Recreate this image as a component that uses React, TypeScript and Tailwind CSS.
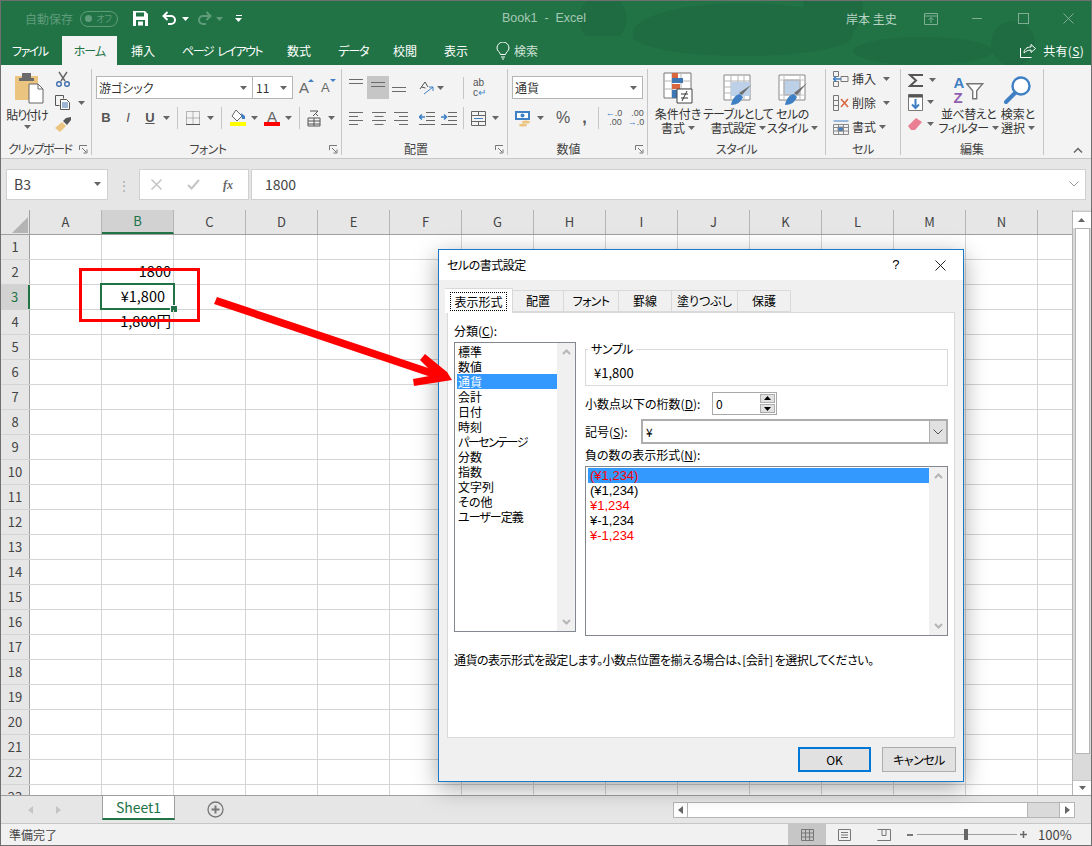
import React from 'react';

const Caret = ({ className = 'fill-[#666]' }: { className?: string }) => (
  <svg width="7" height="4" viewBox="0 0 7 4" className={`shrink-0 ${className}`}><path d="M0 0h7L3.5 4z" /></svg>
);

const Launcher = () => (
  <svg width="9" height="9" viewBox="0 0 9 9" className="absolute right-[3px] bottom-[1px]" fill="none" stroke="#777">
    <path d="M0.5 5V0.5H8" /><path d="M3 3l4 4M8 4.5v3.5H4.5" />
  </svg>
);

function Group({ w, label, labelClass = 'justify-center', children }: { w: string; label: string; labelClass?: string; children: React.ReactNode }) {
  return (
    <div className={`relative h-[86px] shrink-0 border-r border-[#c6c6c6] ${w}`}>
      {children}
      <div className={`absolute left-0 right-0 bottom-[-2px] flex text-[12px] leading-[16px] text-[#444] ${labelClass}`}>{label}</div>
    </div>
  );
}

const Sep = ({ ml }: { ml: string }) => <div className={`w-px h-[22px] bg-[#c6c6c6] shrink-0 ${ml}`} />;

const Lines = ({ kind }: { kind: 'top' | 'left' | 'center' | 'right' }) => {
  const d = {
    top: 'M0 2.5h14M0 6.5h14',
    left: 'M0 1.5h14M0 5.5h9M0 9.5h14M0 13.5h9',
    center: 'M0 1.5h14M2.5 5.5h9M0 9.5h14M2.5 13.5h9',
    right: 'M0 1.5h14M5 5.5h9M0 9.5h14M5 13.5h9',
  }[kind];
  return <svg width="14" height="15" viewBox="0 0 14 15" className="shrink-0"><path d={d} stroke="#6b6b6b" fill="none" /></svg>;
};

function BigButton({ icon, line1, line2, w, track = '' }: { icon: React.ReactNode; line1: string; line2: string; w: string; track?: string }) {
  return (
    <div className={`flex flex-col items-center shrink-0 ${w}`}>
      <div className="h-[35px] flex items-center">{icon}</div>
      <div className={`text-[12px] leading-[14px] text-[#333] whitespace-nowrap ${track}`}>{line1}</div>
      <div className={`text-[12px] leading-[14px] text-[#333] whitespace-nowrap flex items-center gap-[3px] ${track}`}>{line2}<Caret /></div>
    </div>
  );
}

const CondIcon = () => (
  <svg width="30" height="35" viewBox="0 0 30 35" fill="none">
    <path d="M1 1h27v25H1z" fill="#fff" stroke="#777" />
    <path d="M1 9h27M1 17h27M9 1v25M18 1v25" stroke="#b5b5b5" />
    <path d="M9 1h6v5H9z" fill="#d9663f" /><path d="M9 6h11v5H9z" fill="#3f77b5" /><path d="M9 12h8v5H9z" fill="#d9663f" /><path d="M9 18h5v8H9z" fill="#3f77b5" />
    <path d="M14 17h15v14H14z" fill="#fff" stroke="#444" />
    <path d="M18 22h7M18 26h7M24 19l-5 10" stroke="#333" />
  </svg>
);
const TableIcon = () => (
  <svg width="30" height="32" viewBox="0 0 30 32" fill="none">
    <path d="M1 1h26v25H1z" fill="#fff" stroke="#888" />
    <path d="M1 7h26M1 13h26M1 19h26M8 1v25M15 1v25M21 1v25" stroke="#b5b5b5" />
    <path d="M8 8h19v14H8z" fill="#bcd0e8" />
    <path d="M28 11l-9 10-3-2z" fill="#6d6d6d" /><path d="M8 31c1-6 4-10 9-11l3 3c-2 5-6 8-12 8z" fill="#3f80c4" />
  </svg>
);
const StyleIcon = () => (
  <svg width="30" height="32" viewBox="0 0 30 32" fill="none">
    <path d="M1 1h26v25H1z" fill="#fff" stroke="#888" />
    <path d="M6 6h16v15H6z" fill="#bcd0e8" stroke="#999" />
    <path d="M1 6h26M1 21h26M6 1v25M22 1v25" stroke="#c0c0c0" />
    <path d="M29 9l-10 12-3-2z" fill="#6d6d6d" /><path d="M7 31c1-6 4-10 9-11l3 3c-2 5-6 8-12 8z" fill="#3f80c4" />
  </svg>
);
const SortIcon = () => (
  <div className="relative w-[30px] h-[30px] font-['Liberation_Sans'] font-bold text-[15px] leading-[15px]">
    <div className="text-[#3f80c4]">A</div>
    <div className="text-[#8e5fb0]">Z</div>
    <svg width="18" height="17" viewBox="0 0 18 17" fill="none" className="absolute left-[12px] top-[8px]"><path d="M.7 .7h16l-6 7v8h-4v-8z" fill="#fff" stroke="#777" strokeWidth="1.4" /></svg>
  </div>
);
const FindIcon = () => (
  <svg width="28" height="30" viewBox="0 0 28 30" fill="none">
    <circle cx="17" cy="11" r="8.5" stroke="#3f80c4" strokeWidth="2.4" fill="#fff" />
    <path d="M11 18L2 27" stroke="#3f80c4" strokeWidth="4" strokeLinecap="round" />
  </svg>
);

function Ribbon() {
  return (
    <div className="flex h-[94px] shrink-0 pt-[4px] bg-[#f3f3f3] border-b border-[#c6c6c6]">
      <Group w="w-[91px]" label="クリップボード" labelClass="pl-[7px] tracking-[-1.5px]">
        <div className="flex">
          <div className="w-[50px] flex flex-col items-center pt-[3px] pl-[2px]">
            <svg width="30" height="32" viewBox="0 0 30 32" fill="none" className="ml-[3px]">
              <path d="M1 4h23v24H1z" fill="#ebc47f" /><path d="M8 1h9v5h3v3H5V6h3z" fill="#6b6b6b" />
              <path d="M15 12h9l5 5v14H15z" fill="#fff" stroke="#666" /><path d="M24 12v5h5" stroke="#666" />
            </svg>
            <div className="mt-[3px] text-[12px] leading-[15px] text-[#333] whitespace-nowrap tracking-[-1px]">貼り付け</div>
            <div className="mt-[3px]"><Caret /></div>
          </div>
          <div className="flex flex-col pl-[4px] pt-[2px]">
            <svg width="16" height="16" viewBox="0 0 16 16" fill="none" stroke="#3f6fae" strokeWidth="1.4"><path d="M4 1l6 9M12 1L6 10" stroke="#666" /><circle cx="4" cy="13" r="2.3" /><circle cx="12" cy="13" r="2.3" /></svg>
            <div className="flex items-center gap-[7px] mt-[8px]">
              <svg width="16" height="15" viewBox="0 0 16 15" fill="none" stroke="#555"><path d="M.5 .5h8v3M.5 .5v10h4" /><path d="M5.5 4.5h6l3 3v7h-9z" fill="#fff" /><path d="M7 8h6M7 10h6M7 12h6" stroke="#3f6fae" /></svg>
              <Caret />
            </div>
            <svg width="17" height="15" viewBox="0 0 17 15" className="mt-[7px]"><path d="M0 11l7-6 4 4-6 6z" fill="#ebc47f" /><path d="M8 4l3-3 5-1 0 3-4 5z" fill="#555" /></svg>
          </div>
        </div>
        <Launcher />
      </Group>

      <Group w="w-[250px]" label="フォント" labelClass="justify-center pr-[17px] tracking-[-0.5px]">
        <div className="flex items-center pl-[4px] pt-[7px]">
          <div className="w-[157px] h-[23px] bg-white border border-[#b5b5b5] flex items-center justify-between pl-[2px] pr-[5px] text-[12px] text-[#333]">游ゴシック<Caret /></div>
          <div className="w-[40px] h-[23px] bg-white border border-l-0 border-[#b5b5b5] flex items-center justify-between pl-[3px] pr-[5px] text-[12px] text-[#333]">11<Caret /></div>
          <span className="relative ml-[6px] w-[16px] text-[15px] leading-[18px] text-[#666] font-['Liberation_Sans']">A
            <svg width="6" height="3" viewBox="0 0 6 3" className="absolute left-[9px] top-[0px] fill-[#3f80c4]"><path d="M0 3l3-3 3 3z" /></svg>
          </span>
          <span className="relative ml-[6px] w-[16px] text-[13px] leading-[18px] text-[#666] font-['Liberation_Sans']">A
            <svg width="6" height="3" viewBox="0 0 6 3" className="absolute left-[9px] top-[0px] fill-[#3f80c4]"><path d="M0 0h6L3 3z" /></svg>
          </span>
        </div>
        <div className="flex items-center mt-[8px] h-[22px]">
          <span className="ml-[7px] w-[14px] text-center text-[13px] font-bold text-[#555] font-['Liberation_Sans']">B</span>
          <span className="ml-[8px] w-[14px] text-center text-[13px] italic text-[#555] font-['Liberation_Sans']">I</span>
          <span className="ml-[8px] w-[14px] text-center text-[13px] font-bold underline text-[#555] font-['Liberation_Sans']">U</span>
          <span className="ml-[6px]"><Caret /></span>
          <Sep ml="ml-[7px]" />
          <svg width="14" height="14" viewBox="0 0 14 14" className="ml-[8px] shrink-0" fill="none" stroke="#777" strokeDasharray="1 1"><path d="M.5 .5h13v13H.5zM.5 7h13M7 .5v13" /><path d="M0 13.5h14" stroke="#555" strokeDasharray="none" /></svg>
          <span className="ml-[7px]"><Caret /></span>
          <Sep ml="ml-[7px]" />
          <svg width="17" height="16" viewBox="0 0 17 16" className="ml-[7px] shrink-0"><path d="M7 0l6 6-5 5-5-5z" fill="#fff" stroke="#666" /><path d="M12 3l4 3v3h-3z" fill="#3f80c4" /><path d="M1 12h16v4H1z" fill="#ffff00" /></svg>
          <span className="ml-[5px]"><Caret /></span>
          <span className="relative ml-[6px] w-[16px] h-[16px] text-center text-[15px] leading-[13px] text-[#666] font-['Liberation_Sans']">A
            <span className="absolute left-0 bottom-0 w-[16px] h-[4px] bg-[#ff0000]" />
          </span>
          <span className="ml-[5px]"><Caret /></span>
          <Sep ml="ml-[7px]" />
          <svg width="14" height="17" viewBox="0 0 14 17" className="ml-[7px] shrink-0" fill="none" stroke="#555"><path d="M3 1h8L6 6M8 3l3 3" /><path d="M1 8h12v8H1zM1 11h12M1 14h12M7 8v8" /></svg>
          <span className="ml-[7px]"><Caret /></span>
        </div>
        <Launcher />
      </Group>

      <Group w="w-[166px]" label="配置" labelClass="justify-center pr-[17px]">
        <div className="flex items-center mt-[7px] h-[23px]">
          <span className="ml-[7px] mb-[6px]"><Lines kind="top" /></span>
          <div className="ml-[4px] w-[22px] h-[23px] bg-[#c6c6c6] flex items-center justify-center"><Lines kind="top" /></div>
          <span className="ml-[3px] mt-[10px]"><Lines kind="top" /></span>
          <svg width="16" height="16" viewBox="0 0 16 16" className="ml-[12px] shrink-0" fill="none" stroke="#555"><path d="M2 9l5-7 3 5M3.500 7l4 1" /><path d="M6 14l9-7M11 7h4v4" stroke="#3f80c4" /></svg>
          <span className="ml-[3px]"><Caret /></span>
          <div className="ml-[19px] w-px h-[22px] bg-[#c6c6c6]" />
          <div className="ml-[9px] text-[10px] leading-[10px] text-[#555] font-['Liberation_Sans']">
            <div>ab</div><div>c<span className="text-[#3f80c4]">↵</span></div>
          </div>
        </div>
        <div className="flex items-center mt-[8px] h-[22px]">
          <span className="ml-[7px]"><Lines kind="left" /></span>
          <span className="ml-[9px]"><Lines kind="center" /></span>
          <span className="ml-[8px]"><Lines kind="right" /></span>
          <svg width="16" height="13" viewBox="0 0 16 13" className="ml-[11px] shrink-0" fill="none"><path d="M7 .5h9M7 4.500h9M7 8.500h9M0 12.500h16" stroke="#666" /><path d="M6 5H1M3 2.500L.5 5 3 7.500" stroke="#3f80c4" strokeWidth="1.600" /></svg>
          <svg width="16" height="13" viewBox="0 0 16 13" className="ml-[6px] shrink-0" fill="none"><path d="M7 .5h9M7 4.500h9M7 8.500h9M0 12.500h16" stroke="#666" /><path d="M0 5h5M3 2.500L5.500 5 3 7.500" stroke="#3f80c4" strokeWidth="1.600" /></svg>
          <div className="ml-[6px] w-px h-[22px] bg-[#c6c6c6]" />
          <svg width="15" height="15" viewBox="0 0 15 15" className="ml-[7px] shrink-0" fill="none" stroke="#666"><path d="M.5 .5h14v14H.5zM.5 4.500h14M.5 10.500h14M7.500 .5v4M7.500 10.500v4" /><path d="M3 7.500h9" stroke="#3f80c4" /></svg>
          <span className="ml-[6px]"><Caret /></span>
        </div>
        <Launcher />
      </Group>

      <Group w="w-[140px]" label="数値" labelClass="justify-center pr-[18px]">
        <div className="pl-[4px] pt-[7px]">
          <div className="w-[131px] h-[23px] bg-white border border-[#b5b5b5] flex items-center justify-between pl-[2px] pr-[5px] text-[12px] text-[#333]">通貨<Caret /></div>
        </div>
        <div className="flex items-center mt-[8px] h-[22px]">
          <svg width="17" height="17" viewBox="0 0 17 17" className="ml-[7px] shrink-0"><path d="M0 1h15v9H0z" fill="#3f80c4" /><path d="M2 3h11v5H2z" fill="#fff" /><circle cx="7.500" cy="5.500" r="2" fill="#3f80c4" /><ellipse cx="11" cy="12" rx="4" ry="1.600" fill="#ebc47f" /><ellipse cx="8" cy="15" rx="4" ry="1.600" fill="#ebc47f" /></svg>
          <span className="ml-[5px]"><Caret /></span>
          <span className="ml-[12px] text-[16px] leading-[20px] text-[#555] font-['Liberation_Sans']">%</span>
          <span className="ml-[12px] text-[16px] leading-[20px] font-bold text-[#555] font-['Liberation_Sans']">,</span>
          <div className="ml-[11px] w-px h-[22px] bg-[#c6c6c6]" />
          <div className="ml-[7px] w-[16px] text-[9px] leading-[9px] text-[#555] text-right font-['Liberation_Sans']"><div><span className="text-[#3f80c4]">←</span>.0</div><div>.00</div></div>
          <div className="ml-[6px] w-[16px] text-[9px] leading-[9px] text-[#555] text-right font-['Liberation_Sans']"><div>.00</div><div><span className="text-[#3f80c4]">→</span>.0</div></div>
        </div>
        <Launcher />
      </Group>

      <Group w="w-[178px]" label="スタイル" labelClass="justify-center tracking-[-0.5px]">
        <div className="flex pt-[3px]">
          <BigButton w="w-[60px]" icon={<CondIcon />} line1="条件付き" line2="書式" />
          <BigButton w="w-[60px]" icon={<TableIcon />} line1="テーブルとして" line2="書式設定" track="tracking-[-0.7px]" />
          <BigButton w="w-[53px] ml-[-2px]" icon={<StyleIcon />} line1="セルの" line2="スタイル" track="tracking-[-0.5px]" />
        </div>
      </Group>

      <Group w="w-[75px]" label="セル" labelClass="justify-center tracking-[-0.5px]">
        <div className="flex flex-col pl-[7px] mt-[-2px] gap-[1px] text-[12px] text-[#333]">
          <div className="flex items-center h-[23px]">
            <svg width="16" height="16" viewBox="0 0 16 16" fill="none" stroke="#777" className="shrink-0"><path d="M.5 .5h5v5h-5zM.5 10.500h5v5h-5zM8 5.500h7v5H8z" /><path d="M8 8H1M3 5.500L.5 8 3 10.500" stroke="#3f80c4" strokeWidth="1.500" /></svg>
            <span className="ml-[3px] w-[31px]">挿入</span><Caret />
          </div>
          <div className="flex items-center h-[23px]">
            <svg width="16" height="16" viewBox="0 0 16 16" fill="none" stroke="#777" className="shrink-0"><path d="M.5 .5h5v5h-5zM.5 10.500h5v5h-5zM.5 5.500h5v5h-5z" /><path d="M8 4l7 8M15 4l-7 8" stroke="#d9663f" strokeWidth="1.500" /></svg>
            <span className="ml-[3px] w-[31px]">削除</span><Caret />
          </div>
          <div className="flex items-center h-[23px]">
            <svg width="16" height="16" viewBox="0 0 16 16" fill="none" stroke="#888" className="shrink-0"><path d="M.5 2h15" stroke="#3f80c4" /><path d="M.5 5.500h15v10H.5zM.5 8.500h15M.5 12h15M5.500 5.500v10M10.500 5.500v10" /><path d="M5 8h5v4H5z" fill="#3f80c4" /></svg>
            <span className="ml-[3px] w-[27px]">書式</span><Caret />
          </div>
        </div>
      </Group>

      <Group w="w-[143px]" label="編集">
        <div className="flex pt-[3px]">
          <div className="flex flex-col pl-[7px] w-[44px] shrink-0 mt-[-3px]">
            <div className="flex items-center h-[22px] gap-[5px]">
              <svg width="16" height="15" viewBox="0 0 16 15" fill="none" stroke="#555" strokeWidth="2"><path d="M15 2H2l6 5.500L2 13h13" /></svg><Caret />
            </div>
            <div className="flex items-center h-[22px] gap-[4px]">
              <svg width="15" height="17" viewBox="0 0 15 17" fill="none"><path d="M.5 .5h14v16H.5z" fill="#fff" stroke="#777" /><path d="M.5 .5h14v3H.5z" fill="#555" /><path d="M7.500 5v9M4 10.500l3.500 3.500 3.500-3.500" stroke="#3f80c4" strokeWidth="2" /></svg><Caret />
            </div>
            <div className="flex items-center h-[22px] gap-[4px]">
              <svg width="15" height="14" viewBox="0 0 15 14"><path d="M0 9l8-8 6 4-7 8H3z" fill="#ea7f93" /></svg><Caret />
            </div>
          </div>
          <BigButton w="w-[47px]" icon={<SortIcon />} line1="並べ替えと" line2="フィルター" track="tracking-[-0.5px]" />
          <BigButton w="w-[48px] ml-[2px]" icon={<FindIcon />} line1="検索と" line2="選択" />
        </div>
      </Group>

      <div className="flex-1 relative">
        <svg width="10" height="6" viewBox="0 0 10 6" className="absolute right-[8px] bottom-[5px]" fill="none" stroke="#666" strokeWidth="1.500"><path d="M1 5.500l4-4 4 4" /></svg>
      </div>
    </div>
  );
}

const columns = ['A', 'B', 'C', 'D', 'E', 'F', 'G', 'H', 'I', 'J', 'K', 'L', 'M', 'N'];
const rows = Array.from({ length: 23 }, (_, i) => i + 1);

function Sheet() {
  return (
    <div className="flex-1 flex min-h-0 bg-white overflow-hidden">
      <div className="flex-1 min-w-0 overflow-hidden">
        <div className="flex h-[25px] bg-[#e6e6e6] border-b border-[#9f9f9f]">
          <div className="relative w-[29px] shrink-0 border-r border-[#9f9f9f]">
            <svg width="16" height="16" viewBox="0 0 16 16" className="absolute right-[1px] bottom-[1px] fill-[#b4b4b4]"><path d="M16 0v16H0z" /></svg>
          </div>
          {columns.map(c => (
            <div key={c} className={`w-[72px] shrink-0 border-r border-[#b5b5b5] flex items-center justify-center text-[13px] ${c === 'B' ? 'bg-[#d2d2d2] text-[#217346] border-b-2 border-b-[#217346]' : 'text-[#444]'}`}>{c}</div>
          ))}
          <div className="w-[40px] shrink-0" />
        </div>
        {rows.map(r => (
          <div key={r} className="flex h-[25px] border-b border-[#d4d4d4]">
            <div className={`w-[29px] shrink-0 border-r border-[#9f9f9f] flex items-center justify-center text-[13px] ${r === 3 ? 'bg-[#d2d2d2] text-[#217346] border-r-2 border-r-[#217346]' : 'bg-[#e6e6e6] text-[#444]'}`}>{r}</div>
            {columns.map(c => (
              <div key={c} className="relative w-[72px] shrink-0 border-r border-[#d4d4d4] flex items-center justify-end pr-[2px] pb-[2px] text-[14.5px] text-black whitespace-nowrap">
                {c === 'B' && r === 2 && '1800'}
                {c === 'B' && r === 3 && <span className="pr-[6px]">¥1,800</span>}
                {c === 'B' && r === 4 && '1,800円'}
                {c === 'B' && r === 3 && (
                  <div className="absolute left-[-2px] top-[-2px] w-[75px] h-[27px] border-2 border-[#217346]">
                    <div className="absolute right-[-4px] bottom-[-4px] w-[7px] h-[7px] bg-[#217346] border-l border-t border-white" />
                  </div>
                )}
              </div>
            ))}
          </div>
        ))}
      </div>
      <div className="w-[19px] shrink-0 bg-[#dadada] border-l border-[#b5b5b5] flex flex-col items-center">
        <div className="w-full h-[17px] bg-white border-b border-[#c6c6c6] flex items-center justify-center rotate-180 mt-[1px]"><Caret /></div>
        <div className="w-[15px] h-[526px] bg-white border border-[#b5b5b5]" />
        <div className="mt-auto w-full h-[15px] bg-white border-t border-[#c6c6c6] flex items-center justify-center"><Caret /></div>
      </div>
    </div>
  );
}

function TabHead({ label, active, w }: { label: string; active?: boolean; w: string }) {
  return (
    <div className={`flex items-center justify-center text-[12px] text-black border border-[#d9d9d9] border-l-0 ${w} ${active ? 'h-[25px] bg-white border-l border-b-0 relative z-10 mb-[-1px]' : 'h-[22px] bg-[#f0f0f0]'}`}>
      {active ? <span className="border border-dotted border-black px-[3px] leading-[17px]">{label}</span> : label}
    </div>
  );
}

const categories: [string, string][] = [
  ['標準', ''], ['数値', ''], ['通貨', ''], ['会計', ''], ['日付', ''], ['時刻', ''],
  ['パーセンテージ', 'tracking-[-1.5px]'], ['分数', ''], ['指数', ''], ['文字列', ''], ['その他', ''], ['ユーザー定義', 'tracking-[-1px]'],
];
const negatives = ['(¥1,234)', '(¥1,234)', '¥1,234', '¥-1,234', '¥-1,234'];

const ListScroll = () => (
  <div className="absolute right-0 top-0 bottom-0 w-[18px] bg-[#f0f0f0] flex flex-col items-center justify-between py-[6px]">
    <svg width="9" height="6" viewBox="0 0 9 6" fill="none" stroke="#b5b5b5" strokeWidth="2"><path d="M1 5l3.500-3.500L8 5" /></svg>
    <svg width="9" height="6" viewBox="0 0 9 6" fill="none" stroke="#b5b5b5" strokeWidth="2"><path d="M1 1l3.500 3.500L8 1" /></svg>
  </div>
);

function FormatDialog() {
  return (
    <div className="absolute left-[437px] top-[248px] w-[526px] h-[533px] bg-[#f0f0f0] border border-[#1979ca] shadow-[0_6px_22px_rgba(0,0,0,0.35)] flex flex-col z-20">
      <div className="h-[30px] shrink-0 bg-white flex items-center pl-[8px] text-[12px] text-black tracking-[-0.5px]">
        セルの書式設定
        <span className="ml-auto text-[13px] font-['Liberation_Sans']">?</span>
        <svg width="11" height="11" viewBox="0 0 11 11" className="ml-[36px] mr-[17px]" fill="none" stroke="#222"><path d="M.5 .5l10 10M10.500 .5l-10 10" /></svg>
      </div>
      <div className="flex items-end h-[32px] pl-[6px] shrink-0">
        <TabHead label="表示形式" active w="w-[68px]" />
        <TabHead label="配置" w="w-[51px]" />
        <TabHead label="フォント" w="w-[55px] tracking-[-0.7px]" />
        <TabHead label="罫線" w="w-[53px]" />
        <TabHead label="塗りつぶし" w="w-[66px]" />
        <TabHead label="保護" w="w-[53px]" />
      </div>
      <div className="w-[508px] h-[426px] ml-[8px] shrink-0 bg-white border border-[#d9d9d9] relative pl-[6px] pr-[6px] pt-[10px] text-[12px] text-black">
        <div className="flex gap-[9px]">
          <div className="w-[122px] shrink-0">
            <div className="leading-[16px] h-[19px]">分類(<span className="underline">C</span>):</div>
            <div className="relative h-[290px] border border-[#828790] pt-[1px] pl-[2px] leading-[15px]">
              {categories.map(([c, track]) => (
                <div key={c} className={`h-[15px] w-[100px] pl-[1px] whitespace-nowrap ${track} ${c === '通貨' ? 'bg-[#3399ff] text-white' : ''}`}>{c}</div>
              ))}
              <ListScroll />
            </div>
          </div>
          <div className="w-[363px] shrink-0 pt-[26px]">
            <div className="relative h-[37px] border border-[#d9d9d9] flex items-center pl-[8px] pt-[10px] text-[13px]">
              <span className="absolute left-[2px] top-[-8px] bg-white px-[3px] text-[12px] leading-[14px] tracking-[-0.5px]">サンプル</span>
              ¥1,800
            </div>
            <div className="flex items-center mt-[6px] h-[23px]">
              <span className="w-[127px]">小数点以下の桁数(<span className="underline">D</span>):</span>
              <div className="w-[65px] h-[23px] border border-[#a9a9a9] flex items-center justify-between pl-[3px] pr-[1px]">
                0
                <div className="flex flex-col gap-px">
                  <div className="w-[15px] h-[9px] bg-[#e1e1e1] border border-[#adadad] flex items-center justify-center rotate-180"><Caret className="fill-black" /></div>
                  <div className="w-[15px] h-[9px] bg-[#e1e1e1] border border-[#adadad] flex items-center justify-center"><Caret className="fill-black" /></div>
                </div>
              </div>
            </div>
            <div className="flex items-center mt-[4px] h-[25px]">
              <span className="w-[56px]">記号(<span className="underline">S</span>):</span>
              <div className="flex-1 h-[25px] border-2 border-[#adadad] flex items-center justify-between pl-[3px]">
                ¥
                <div className="w-[17px] h-full bg-[#e1e1e1] border-l border-[#adadad] flex items-center justify-center">
                  <svg width="10" height="6" viewBox="0 0 10 6" fill="none" stroke="#555"><path d="M.5 .5l4.500 4.500 4.500-4.500" /></svg>
                </div>
              </div>
            </div>
            <div className="leading-[16px] mt-[3px] h-[19px]">負の数の表示形式(<span className="underline">N</span>):</div>
            <div className="relative h-[170px] border border-[#828790] pt-[1px] pl-[2px] leading-[15px] text-[13px] font-['Liberation_Sans']">
              {negatives.map((n, i) => (
                <div key={i} className={`h-[15px] w-[341px] pl-[2px] ${i === 0 ? 'bg-[#3399ff] text-[#ff0000]' : i === 2 || i === 4 ? 'text-[#ff0000]' : ''}`}>{n}</div>
              ))}
              <ListScroll />
            </div>
          </div>
        </div>
        <div className="mt-[16px] leading-[16px] whitespace-nowrap tracking-[-0.5px]">通貨の表示形式を設定します。小数点位置を揃える場合は、[会計] を選択してください。</div>
      </div>
      <div className="flex justify-end gap-[11px] pt-[9px] pr-[7px] text-[12px] text-black">
        <button className="w-[73px] h-[25px] bg-[#e1e1e1] border-2 border-[#0078d7]">OK</button>
        <button className="w-[74px] h-[25px] bg-[#e1e1e1] border border-[#adadad] tracking-[-0.5px]">キャンセル</button>
      </div>
    </div>
  );
}

export default function App() {
  return (
    <div className="relative w-[1092px] h-[846px] overflow-hidden border border-[#6f6f6f] flex flex-col bg-[#e6e6e6] font-['Noto_Sans_CJK_JP','Noto_Sans',sans-serif] [font-feature-settings:'palt']">
      {/* title bar */}
      <div className="relative h-[35px] shrink-0 bg-[#217346] flex items-center text-[12px] overflow-hidden">
        <svg width="560" height="64" viewBox="0 0 560 64" className="absolute left-[532px] top-0 fill-[#1f6c42]">
          <circle cx="70" cy="18" r="24" /><ellipse cx="210" cy="32" rx="110" ry="30" /><circle cx="300" cy="8" r="30" /><circle cx="480" cy="42" r="22" /><ellipse cx="390" cy="50" rx="70" ry="14" />
        </svg>
        <span className="relative ml-[24px] w-[48px] text-[#5f9c7b] whitespace-nowrap">自動保存</span>
        <div className="relative ml-[7px] w-[38px] h-[16px] rounded-full border border-[#5f9c7b] flex items-center justify-between pl-[4px] pr-[5px] text-[#5f9c7b] text-[9px]">
          <div className="w-[7px] h-[7px] rounded-full bg-[#5f9c7b]" />オフ
        </div>
        <svg width="15" height="15" viewBox="0 0 15 15" className="relative ml-[15px]"><path d="M0 0h12l3 3v12H0z" fill="#fff" /><path d="M3 1.500h8v4H3z" fill="#217346" /><path d="M3 9h9v6H3z" fill="#217346" /><path d="M5 10.500h5v4H5z" fill="#fff" /></svg>
        <svg width="15" height="15" viewBox="0 0 15 15" className="relative ml-[14px]" fill="none" stroke="#fff" strokeWidth="2"><path d="M2 5h7a4 4 0 010 8H6" /><path d="M5.500 1L1.500 5l4 4" /></svg>
        <span className="relative ml-[5px]"><Caret className="fill-white" /></span>
        <svg width="15" height="15" viewBox="0 0 15 15" className="relative ml-[8px]" fill="none" stroke="#5f9c7b" strokeWidth="2"><path d="M13 5H6a4 4 0 000 8h3" /><path d="M9.500 1l4 4-4 4" /></svg>
        <span className="relative ml-[4px]"><Caret className="fill-[#5f9c7b]" /></span>
        <div className="relative ml-[12px] flex flex-col items-center gap-[2px]"><div className="w-[6px] h-px bg-white" /><Caret className="fill-white" /></div>
        <span className="relative ml-[260px] w-[90px] text-[#a6c9b5] text-[12.5px] whitespace-nowrap font-['Liberation_Sans']">Book1&nbsp; -&nbsp; Excel</span>
        <span className="relative ml-[254px] w-[55px] text-[#b9d5c5] whitespace-nowrap">岸本 圭史</span>
        <svg width="14" height="12" viewBox="0 0 14 12" className="relative ml-[23px]" fill="none" stroke="#7fae95"><path d="M.5 .5h13v11H.5zM.5 3h13M7 10V5M4.500 7L7 4.500 9.500 7" /></svg>
        <div className="relative ml-[34px] w-[10px] h-px bg-[#7fae95]" />
        <div className="relative ml-[36px] w-[11px] h-[11px] border border-[#7fae95]" />
        <svg width="11" height="11" viewBox="0 0 11 11" className="relative ml-[34px]" fill="none" stroke="#7fae95"><path d="M.5 .5l10 10M10.500 .5l-10 10" /></svg>
      </div>

      {/* ribbon tabs */}
      <div className="relative h-[29px] shrink-0 bg-[#217346] flex items-center text-[12px] text-white whitespace-nowrap overflow-hidden">
        <svg width="560" height="29" viewBox="0 0 560 29" className="absolute left-[532px] top-0 fill-[#1f6c42]">
          <ellipse cx="210" cy="0" rx="110" ry="20" /><circle cx="480" cy="8" r="22" /><ellipse cx="390" cy="15" rx="70" ry="14" />
        </svg>
        <span className="relative ml-[11px] w-[50px] tracking-[-1.5px]">ファイル</span>
        <div className="relative w-[55px] h-[29px] bg-[#f3f3f3] text-[#217346] flex items-center justify-center tracking-[-1px]">ホーム</div>
        <span className="relative ml-[14px] w-[51px]">挿入</span>
        <span className="relative w-[105px] tracking-[-1.5px] [word-spacing:3px]">ページ レイアウト</span>
        <span className="relative w-[51px]">数式</span>
        <span className="relative w-[55px] tracking-[-1px]">データ</span>
        <span className="relative w-[51px]">校閲</span>
        <span className="relative w-[50px]">表示</span>
        <svg width="14" height="18" viewBox="0 0 14 18" className="relative ml-[2px]" fill="none" stroke="#fff"><path d="M4.500 12.500C4 10 1 9 1 6a6 6 0 0112 0c0 3-3 4-3.500 6.500z" /><path d="M5 15h4M6 17h2" /></svg>
        <span className="relative ml-[4px] text-[#cfe3d8]">検索</span>
        <svg width="16" height="15" viewBox="0 0 16 15" className="relative ml-auto" fill="none" stroke="#fff"><path d="M.5 5v9.500h11" /><path d="M4 10c0-4 3-6 7-6V1.500L15.500 5.500 11 9.500V7c-3 0-5 1-7 3z" /></svg>
        <span className="relative ml-[7px] mr-[7px] tracking-[0.3px]">共有(<span className="underline">S</span>)</span>
      </div>

      <Ribbon />

      {/* formula bar */}
      <div className="h-[51px] shrink-0 bg-[#e6e6e6] flex items-center pl-[5px] pr-[5px] text-[#444] text-[14px]">
        <div className="w-[102px] h-[31px] bg-white border border-[#d0d0d0] flex items-center justify-between pl-[7px] pr-[6px] pb-[1px]">B3<Caret /></div>
        <div className="w-[31px] flex justify-center text-[#a8a8a8] text-[12px] tracking-tighter">⋮</div>
        <div className="w-[110px] h-[31px] bg-white border border-[#d0d0d0] flex items-center pl-[11px] shrink-0">
          <svg width="11" height="11" viewBox="0 0 11 11" fill="none" stroke="#c4c4c4" strokeWidth="1.500"><path d="M.5 .5l10 10M10.500 .5l-10 10" /></svg>
          <svg width="13" height="11" viewBox="0 0 13 11" className="ml-[25px]" fill="none" stroke="#c4c4c4" strokeWidth="2"><path d="M1 6l3.500 3.500L12 1" /></svg>
          <span className="ml-[23px] text-[12px] italic font-bold text-[#666] font-['Liberation_Serif']">fx</span>
        </div>
        <div className="ml-[2px] flex-1 h-[31px] bg-white border border-[#d0d0d0] flex items-center justify-between pl-[13px] pr-[6px] pb-[1px]">
          1800
          <svg width="10" height="6" viewBox="0 0 10 6" fill="none" stroke="#999"><path d="M.5 .5l4.500 4.500 4.500-4.500" /></svg>
        </div>
      </div>

      <Sheet />

      {/* sheet tabs */}
      <div className="h-[28px] shrink-0 bg-[#e6e6e6] border-t border-[#9f9f9f] flex items-center text-[14px]">
        <svg width="5" height="8" viewBox="0 0 5 8" className="ml-[27px] fill-[#c4c4c4]"><path d="M5 0v8L0 4z" /></svg>
        <svg width="5" height="8" viewBox="0 0 5 8" className="ml-[23px] fill-[#c4c4c4]"><path d="M0 0v8l5-4z" /></svg>
        <div className="ml-[41px] w-[73px] h-[24px] self-start bg-white border-x border-b-2 border-[#9f9f9f] border-b-[#217346] text-[#217346] flex items-center justify-center">Sheet1</div>
        <svg width="17" height="17" viewBox="0 0 17 17" className="ml-[32px]" fill="none" stroke="#777"><circle cx="8.500" cy="8.500" r="7.500" strokeWidth="1.300" /><path d="M4.500 8.500h8M8.500 4.500v8" strokeWidth="2" /></svg>
        <div className="ml-[449px] w-[402px] h-[16px] flex items-center bg-[#dadada] border border-[#b5b5b5]">
          <div className="w-[14px] h-full bg-white flex items-center justify-center border-r border-[#b5b5b5]"><svg width="5" height="8" viewBox="0 0 5 8" className="fill-[#666]"><path d="M5 0v8L0 4z" /></svg></div>
          <div className="w-[340px] h-full bg-white border-r border-[#b5b5b5]" />
          <div className="ml-auto w-[15px] h-full bg-white flex items-center justify-center border-l border-[#b5b5b5]"><svg width="5" height="8" viewBox="0 0 5 8" className="fill-[#666]"><path d="M0 0v8l5-4z" /></svg></div>
        </div>
      </div>

      {/* status bar */}
      <div className="h-[22px] shrink-0 bg-[#f1f1f1] border-t border-[#c6c6c6] flex items-center text-[12px] text-[#444]">
        <span className="ml-[8px]">準備完了</span>
        <div className="ml-auto w-[38px] h-full bg-[#c6c6c6] flex items-center justify-center">
          <svg width="13" height="12" viewBox="0 0 13 12" fill="none" stroke="#777"><path d="M.5 .5h12v11H.5zM.5 4h12M.5 8h12M4.500 .5v11M8.500 .5v11" /></svg>
        </div>
        <svg width="13" height="12" viewBox="0 0 13 12" className="ml-[12px]" fill="none" stroke="#777"><path d="M.5 .5h12v11H.5zM3 3.500h7M3 6h7M3 8.500h7" /></svg>
        <svg width="14" height="12" viewBox="0 0 14 12" className="ml-[26px]" fill="none" stroke="#777"><path d="M.5 .5h13v11H.5M13.500 11.500H.500M5 .5v6h4V.5" /></svg>
        <div className="ml-[16px] w-[6px] h-[2px] bg-[#777]" />
        <div className="relative ml-[4px] w-[100px] h-px bg-[#9f9f9f]">
          <div className="absolute left-[47px] top-[-5px] w-[4px] h-[11px] bg-[#666]" />
        </div>
        <svg width="7" height="7" viewBox="0 0 7 7" className="ml-[3px]" fill="none" stroke="#666" strokeWidth="1.500"><path d="M0 3.500h7M3.500 0v7" /></svg>
        <span className="ml-[11px] mr-[20px] w-[33px] text-[13px] whitespace-nowrap">100%</span>
      </div>

      <FormatDialog />

      {/* annotation: red box and arrow */}
      <div className="absolute left-[78px] top-[267px] w-[121px] h-[54px] border-[3px] border-[#ff0000] z-30" />
      <svg width="1092" height="846" viewBox="0 0 1092 846" className="absolute left-[-1px] top-[-1px] z-30 pointer-events-none" fill="#ff0000">
        <path d="M217 297L214 304 440 380 443 373z" />
        <path d="M425 354L420 360 438 378 452 380 447 372z" />
        <path d="M413 379L414 386 452 380 440 374z" />
      </svg>
    </div>
  );
}
